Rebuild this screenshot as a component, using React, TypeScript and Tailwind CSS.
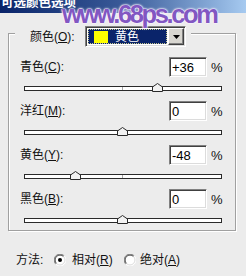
import React from "react";

const FONT = "font-['Liberation_Sans','Noto_Sans_CJK_SC',sans-serif]";

function Slider({ value }: { value: number }) {
  const center = 98.5 + (value / 100) * 98;
  return (
    <div className="relative ml-[15px] mr-[13px] mt-[6px] h-[9px]">
      <div className="absolute left-0 right-0 top-[3px] h-[5px] border border-[#2a2a2a] bg-white" />
      <div className="absolute left-[98px] top-[4px] h-[3px] w-px bg-[#a8a8a8]" />
      <svg
        className="absolute top-0"
        style={{ left: center - 5.5 }}
        width="11"
        height="9"
        viewBox="0 0 11 9"
      >
        <polygon
          points="0.5,8.5 0.5,4 5.5,0.5 10.5,4 10.5,8.5"
          fill="#f2f2f2"
          stroke="#2a2a2a"
          strokeWidth="1"
        />
      </svg>
    </div>
  );
}

function Row({
  name,
  hot,
  value,
  num,
  first,
}: {
  name: string;
  hot: string;
  value: string;
  num: number;
  first?: boolean;
}) {
  return (
    <div className={first ? "" : "mt-[9px]"}>
      <div className="flex h-[20px] items-center pl-[11px]">
        <span className="flex-1 text-[12px] leading-none text-[#111]">
          {name}(<u className="underline-offset-1">{hot}</u>):
        </span>
        <div className="flex h-[20px] w-[38px] items-center border border-b-white border-l-[#808080] border-r-white border-t-[#808080] bg-white pl-[2px] text-[13px] leading-none text-black shadow-[inset_1px_1px_0_#404040,inset_-1px_-1px_0_#dcdcdc]">
          {value}
        </div>
        <span className="w-[28px] pl-[4px] text-[13px] leading-none text-[#111]">%</span>
      </div>
      <Slider value={num} />
    </div>
  );
}

function Radio({ checked }: { checked?: boolean }) {
  return (
    <svg width="12" height="12" viewBox="0 0 12 12">
      <circle cx="6" cy="6" r="5.5" fill="#ffffff" />
      <path d="M1.8 10.2 A5.5 5.5 0 0 1 10.2 1.8" fill="none" stroke="#808080" strokeWidth="1" />
      <path d="M10.2 1.8 A5.5 5.5 0 0 1 1.8 10.2" fill="none" stroke="#ffffff" strokeWidth="1" />
      <path d="M2.5 9.5 A4.5 4.5 0 0 1 9.5 2.5" fill="none" stroke="#404040" strokeWidth="1" />
      <path d="M9.5 2.5 A4.5 4.5 0 0 1 2.5 9.5" fill="none" stroke="#dcdcdc" strokeWidth="1" />
      {checked && <circle cx="6" cy="6" r="2" fill="#000" />}
    </svg>
  );
}

export default function App() {
  return (
    <div className={`relative h-[276px] w-[246px] overflow-hidden bg-[#ececec] ${FONT}`}>
      {/* title bar */}
      <div className="h-[13px] overflow-hidden bg-linear-to-r from-[#0a246a] via-[#3a5a98] to-[#a6caf0] pl-[1px]">
        <div className="-mt-[3px] text-[12.5px] font-bold leading-[13px] text-white">
          可选颜色选项
        </div>
      </div>

      {/* group box */}
      <fieldset className="ml-[8px] mt-[13px] w-[228px] border border-[#a0a0a0] shadow-[inset_1px_1px_0_#ffffff,1px_1px_0_#ffffff]">
        <legend className="ml-[6px] h-[15px] bg-[#ececec] pr-[5px]">
          <div className="flex h-[15px] items-start pl-[15px]">
            <span className="flex h-[21px] w-[55px] shrink-0 items-center text-[12px] leading-none text-[#111]">
              颜色(<u className="underline-offset-1">O</u>):
            </span>
            <div className="flex h-[21px] w-[101px] shrink-0 border border-b-white border-l-[#808080] border-r-white border-t-[#808080] bg-white p-px shadow-[inset_1px_1px_0_#404040,inset_-1px_-1px_0_#dcdcdc]">
              <div className="m-px flex flex-1 items-center border border-dotted border-[#c8c890] bg-[#0a246a]">
                <div className="ml-[5px] h-[12px] w-[14px] bg-[#ffff00]" />
                <span className="ml-[7px] text-[12px] leading-none text-white">黄色</span>
              </div>
              <div className="flex w-[16px] items-center justify-center border border-b-[#404040] border-l-white border-r-[#404040] border-t-white bg-[#d8d6d0] shadow-[inset_-1px_-1px_0_#808080]">
                <svg width="7" height="4" viewBox="0 0 7 4">
                  <polygon points="0,0 7,0 3.5,4" fill="#000" />
                </svg>
              </div>
            </div>
          </div>
        </legend>
        <div className="pb-[6px] pt-[16px]">
          <Row name="青色" hot="C" value="+36" num={36} first />
          <Row name="洋红" hot="M" value="0" num={0} />
          <Row name="黄色" hot="Y" value="-48" num={-48} />
          <Row name="黑色" hot="B" value="0" num={0} />
        </div>
      </fieldset>

      {/* method row */}
      <div className="mt-[21px] flex h-[16px] items-center pl-[16px] text-[12px] leading-none text-[#111]">
        <span className="w-[38px]">方法:</span>
        <Radio checked />
        <span className="ml-[6px] w-[52px]">
          相对(<u className="underline-offset-1">R</u>)
        </span>
        <Radio />
        <span className="ml-[4px]">
          绝对(<u className="underline-offset-1">A</u>)
        </span>
      </div>

      {/* watermark */}
      <div className="absolute left-[62px] top-[2px] font-['Liberation_Sans',sans-serif] text-[25.5px] font-bold leading-[25px] tracking-[-2.4px] text-[#8257c2] [text-shadow:0_0_1px_#ffffff,0_0_1px_#ffffff,0_0_2px_#ffffff,0_0_3px_#f0e0ff]">
        www.68ps.com
      </div>
    </div>
  );
}
